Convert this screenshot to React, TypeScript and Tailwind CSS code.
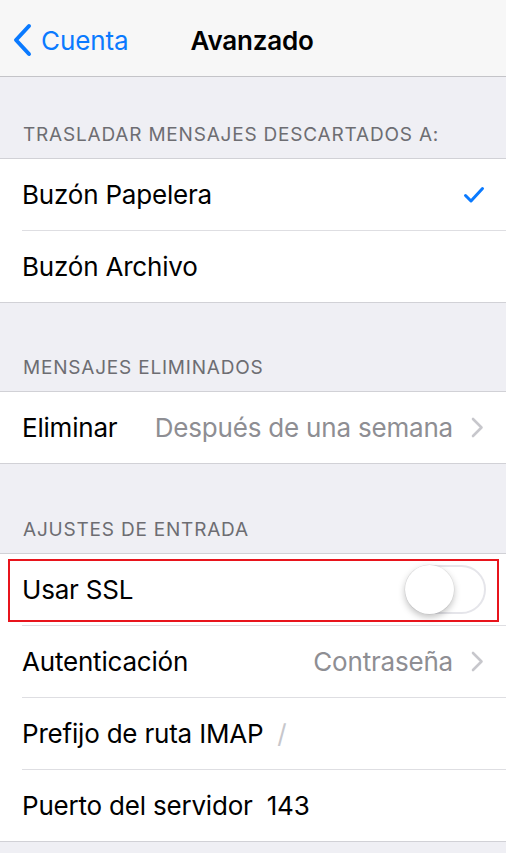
import React from 'react';

const font = { fontFamily: 'Inter, "Liberation Sans", Arial, sans-serif' };

const Chevron: React.FC = () => (
  <svg width="13" height="21" viewBox="0 0 13 21" className="ml-[18px] shrink-0">
    <path d="M2 2 L10.5 10.5 L2 19" fill="none" stroke="#c7c7cc" strokeWidth="2.6" strokeLinecap="round" strokeLinejoin="round" />
  </svg>
);

const Header: React.FC<{ title: string; h: string }> = ({ title, h }) => (
  <div className={`${h} flex items-end pl-[23px] pb-[9px] text-[19px] tracking-[0.8px] text-[#6d6d72] border-b border-[#d1d1d6]`}>
    {title}
  </div>
);

const Row: React.FC<{ last?: boolean; children: React.ReactNode }> = ({ last, children }) => (
  <div className="pl-[22px]">
    <div className={`flex items-center pr-[22px] ${last ? 'h-[71px]' : 'h-[72px] border-b border-[#dedee2]'}`}>{children}</div>
  </div>
);

const App: React.FC = () => {
  return (
    <div className="w-[506px] h-[853px] overflow-hidden bg-[#efeff4] text-black text-[26px] tracking-[-0.2px]" style={font}>
      {/* navigation bar */}
      <div className="h-[77px] pt-[4px] bg-[#f7f7f7] border-b border-[#c4c4c8] flex items-center">
        <div className="flex items-center pl-[12px] text-[#0a7aff]">
          <svg width="22" height="34" viewBox="0 0 22 34">
            <path d="M17 3 L4 17 L17 31" fill="none" stroke="#0a7aff" strokeWidth="4" strokeLinecap="round" strokeLinejoin="round" />
          </svg>
          <span className="ml-[7px] text-[26px] tracking-[-0.1px]">Cuenta</span>
        </div>
        <span className="ml-[62px] text-[26px] font-semibold tracking-[-0.2px]">Avanzado</span>
      </div>

      <Header title="TRASLADAR MENSAJES DESCARTADOS A:" h="h-[82px]" />
      <div className="bg-white border-b border-[#d1d1d6]">
        <Row>
          <span className="flex-1">Buzón Papelera</span>
          <svg width="22" height="18" viewBox="0 0 22 18" className="mr-[-1px]">
            <path d="M2.5 9.5 L8 15 L19.5 2.5" fill="none" stroke="#0a7aff" strokeWidth="3" strokeLinecap="round" strokeLinejoin="round" />
          </svg>
        </Row>
        <Row last>
          <span>Buzón Archivo</span>
        </Row>
      </div>

      <Header title="MENSAJES ELIMINADOS" h="h-[89px]" />
      <div className="bg-white border-b border-[#d1d1d6]">
        <Row last>
          <span>Eliminar</span>
          <span className="flex-1 text-right text-[#8e8e93]">Después de una semana</span>
          <Chevron />
        </Row>
      </div>

      <Header title="AJUSTES DE ENTRADA" h="h-[90px]" />
      <div className="bg-white border-b border-[#d1d1d6]">
        <div className="relative">
          <Row>
            <span className="flex-1">Usar SSL</span>
            <div className="w-[81px] h-[49px] rounded-full border-[2px] border-[#e5e5ea] bg-white relative mr-[-2px]">
              <div className="absolute left-[-2px] top-[-2px] w-[49px] h-[49px] rounded-full bg-white shadow-[0_3px_7px_rgba(0,0,0,0.25),0_0_0_0.5px_rgba(0,0,0,0.08)]" />
            </div>
          </Row>
          <div className="absolute left-[8px] top-[5px] w-[491px] h-[63px] border-[2px] border-[#e8141c] pointer-events-none" />
        </div>
        <Row>
          <span>Autenticación</span>
          <span className="flex-1 text-right text-[#8e8e93]">Contraseña</span>
          <Chevron />
        </Row>
        <Row>
          <span>Prefijo de ruta IMAP</span>
          <span className="ml-[14px] text-[#c7c7cc]">/</span>
        </Row>
        <Row last>
          <span>Puerto del servidor</span>
          <span className="ml-[14px]">143</span>
        </Row>
      </div>
    </div>
  );
};

export default App;
